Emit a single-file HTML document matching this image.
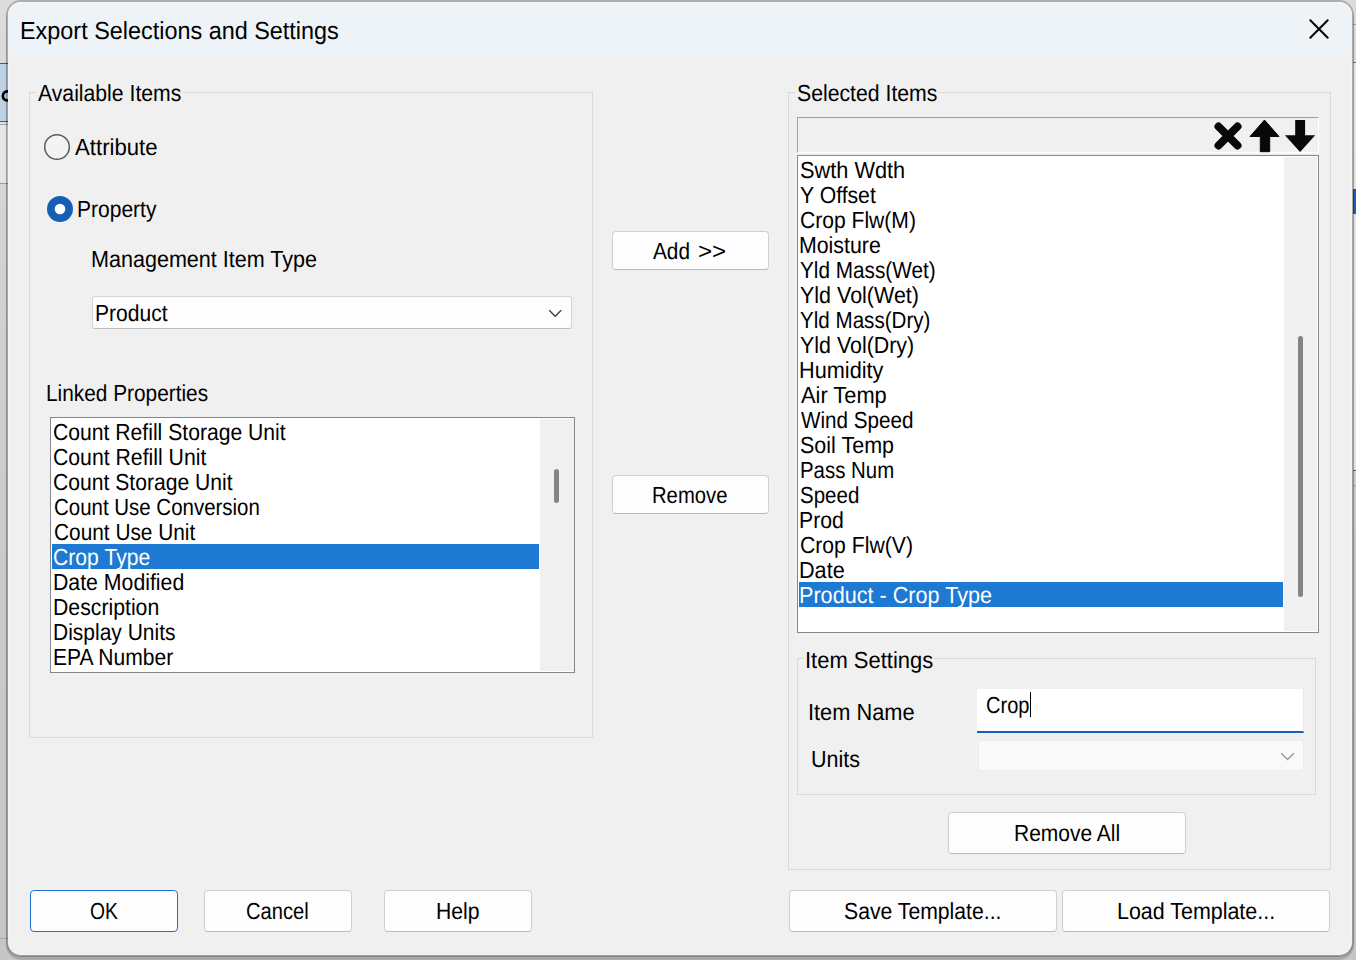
<!DOCTYPE html>
<html><head><meta charset="utf-8">
<style>
*{margin:0;padding:0;box-sizing:border-box}
html,body{width:1356px;height:960px;overflow:hidden;background:#cdcdcd;font-family:"Liberation Sans",sans-serif;font-size:23.3px;color:#000;text-rendering:geometricPrecision}
.a{position:absolute}
.t{position:absolute;white-space:nowrap;line-height:25px;height:25px;transform-origin:0 0}
#dlg{left:6px;top:0;width:1348px;height:957px;background:#f0f0f0;background-clip:padding-box;border:2px solid rgba(0,0,0,.21);border-radius:15px;box-shadow:inset 0 0 0 1px rgba(255,255,255,.3),0 3px 1px 0 rgba(0,0,0,.15)}
#title{left:8px;top:2px;width:1344px;height:56px;background:#eef3f8;border-radius:13px 13px 0 0;border-top:1px solid #f3f8fd}
.grp{position:absolute;border:1px solid #d9d9d9}
.btn{position:absolute;background:#fdfdfd;border:1px solid #d0d0d0;border-bottom-color:#b9b9b9;border-radius:4px}
.list{position:absolute;background:#fff;border:1px solid #838790}
.sel{background:#1e79d2}
.track{position:absolute;background:#f0f0f0}
.thumb{position:absolute;background:#858585;border-radius:3px}

</style></head><body>
<div class="a" style="left:0;top:0;width:1356px;height:960px;background:linear-gradient(180deg,#dcdcdc 0%,#d2d2d2 30%,#cacaca 60%,#c6c6c6 100%)"></div>
<div class="a" style="left:0;top:63px;width:8px;height:59px;background:#bdd2e4;border-top:1px solid #2a5d9a;border-bottom:1px solid #2a5d9a"></div>
<div class="a" style="left:0;top:122px;width:8px;height:2px;background:#e2e2e2"></div>
<div class="a" style="left:0;top:124px;width:8px;height:1px;background:#a4a4a4"></div>
<div class="a" style="left:0;top:125px;width:8px;height:58px;background:#e6e6e6"></div>
<div class="a" style="left:0;top:183px;width:8px;height:1px;background:#9c9c9c"></div>
<div class="a" style="left:0;top:938px;width:8px;height:1px;background:#a9a9a9"></div>
<div class="a" style="left:1353px;top:24px;width:3px;height:1px;background:#a0a0a0"></div>
<div class="a" style="left:1353px;top:62px;width:3px;height:1px;background:#777"></div>
<div class="a" style="left:1353px;top:63px;width:3px;height:407px;background:#e4e4e4"></div>
<div class="a" style="left:1353px;top:189px;width:3px;height:25px;background:#1f5fb0"></div>
<div class="a" style="left:1353px;top:470px;width:3px;height:1px;background:#666"></div>
<div class="a" style="left:1353px;top:471px;width:3px;height:14px;background:#cfcfcf"></div>
<div class="a" style="left:1353px;top:485px;width:3px;height:1px;background:#aaa"></div>
<svg class="a" style="left:0;top:86px" width="10" height="20" viewBox="0 0 10 20"><path d="M8.4 5.4A4.6 4.6 0 1 0 8.4 14.4" fill="none" stroke="#000" stroke-width="2.7"/></svg>
<div class="a" id="dlg"></div>
<div class="a" id="title"></div>
<div class="t" style="left:19.90px;top:19px;font-size:24.7px;transform:scaleX(0.9482);">Export Selections and Settings</div>
<svg class="a" style="left:1305px;top:15px" width="28" height="28" viewBox="0 0 28 28"><path d="M5.3 5.3L22.7 22.7M22.7 5.3L5.3 22.7" stroke="#000" stroke-width="2" stroke-linecap="round"/></svg>
<div class="grp" style="left:29px;top:92px;width:564px;height:646px"></div>
<div class="a" style="left:36px;top:80px;width:147px;height:25px;background:#f0f0f0"></div>
<div class="t" style="left:38.20px;top:81px;font-size:23.3px;transform:scaleX(0.9096);">Available Items</div>
<svg class="a" style="left:43px;top:133px" width="28" height="28" viewBox="0 0 28 28"><circle cx="14" cy="14" r="12.3" fill="#f3f3f3" stroke="#5a5a5a" stroke-width="1.5"/></svg>
<div class="t" style="left:75.20px;top:135px;font-size:23.3px;transform:scaleX(0.9523);">Attribute</div>
<svg class="a" style="left:46px;top:195px" width="28" height="28" viewBox="0 0 28 28"><circle cx="14" cy="14" r="13" fill="#175fb5"/><circle cx="14" cy="14" r="5.3" fill="#fff"/></svg>
<div class="t" style="left:77.40px;top:197px;font-size:23.3px;transform:scaleX(0.9023);">Property</div>
<div class="t" style="left:91.05px;top:247px;font-size:23.3px;transform:scaleX(0.9253);">Management Item Type</div>
<div class="a" style="left:92px;top:296px;width:480px;height:33px;background:#fdfdfd;border:1px solid #d4d4d4;border-bottom-color:#bdbdbd;border-radius:3px"></div>
<div class="t" style="left:95.39px;top:301px;font-size:23.3px;transform:scaleX(0.9045);">Product</div>
<svg class="a" style="left:546px;top:306px" width="18" height="14" viewBox="0 0 18 14"><path d="M3.2 4.2L9.2 10.2L15.2 4.2" fill="none" stroke="#404040" stroke-width="1.4"/></svg>
<div class="t" style="left:46.31px;top:381px;font-size:23.3px;transform:scaleX(0.8939);">Linked Properties</div>
<div class="list" style="left:50px;top:417px;width:525px;height:256px"></div>
<div class="track" style="left:540px;top:419px;width:34px;height:252px"></div>
<div class="thumb" style="left:554px;top:469px;width:5px;height:34px"></div>
<div class="t" style="left:53.49px;top:420px;font-size:23.3px;transform:scaleX(0.9075);">Count Refill Storage Unit</div>
<div class="t" style="left:53.49px;top:445px;font-size:23.3px;transform:scaleX(0.9108);">Count Refill Unit</div>
<div class="t" style="left:53.49px;top:470px;font-size:23.3px;transform:scaleX(0.9066);">Count Storage Unit</div>
<div class="t" style="left:53.52px;top:495px;font-size:23.3px;transform:scaleX(0.8784);">Count Use Conversion</div>
<div class="t" style="left:53.51px;top:520px;font-size:23.3px;transform:scaleX(0.8943);">Count Use Unit</div>
<div class="a sel" style="left:52px;top:544px;width:487px;height:25px"></div>
<div class="t" style="left:53.49px;top:545px;font-size:23.3px;transform:scaleX(0.9086);color:#fff">Crop Type</div>
<div class="t" style="left:52.57px;top:570px;font-size:23.3px;transform:scaleX(0.9129);">Date Modified</div>
<div class="t" style="left:52.58px;top:595px;font-size:23.3px;transform:scaleX(0.9115);">Description</div>
<div class="t" style="left:52.60px;top:620px;font-size:23.3px;transform:scaleX(0.9008);">Display Units</div>
<div class="t" style="left:52.59px;top:645px;font-size:23.3px;transform:scaleX(0.9046);">EPA Number</div>
<div class="btn" style="left:612px;top:231px;width:157px;height:39px"></div>
<div class="t" style="left:653.00px;top:239px;font-size:23.3px;transform:scaleX(0.8925);">Add</div>
<div class="t" style="left:697.86px;top:239px;font-size:23.3px;transform:scaleX(1.0360);">&gt;&gt;</div>
<div class="btn" style="left:612px;top:475px;width:157px;height:39px"></div>
<div class="t" style="left:652.06px;top:483px;font-size:23.3px;transform:scaleX(0.8690);">Remove</div>
<div class="grp" style="left:788px;top:92px;width:543px;height:778px"></div>
<div class="a" style="left:795px;top:80px;width:143px;height:25px;background:#f0f0f0"></div>
<div class="t" style="left:796.59px;top:81px;font-size:23.3px;transform:scaleX(0.9112);">Selected Items</div>
<div class="a" style="left:797px;top:117px;width:522px;height:36px;background:#f0f0f0;border-top:1px solid #a0a0a0;border-left:1px solid #a0a0a0;border-right:1px solid #fff;border-bottom:1px solid #fff"></div>
<svg class="a" style="left:1210px;top:118px" width="110" height="36" viewBox="0 0 110 36"><path d="M8.5 8.5L27.5 27.5M27.5 8.5L8.5 27.5" stroke="#070809" stroke-width="8" stroke-linecap="round"/><path d="M54.5 2L69 18.5H59.7V33.7H50.3V18.5H40Z" fill="#070809" stroke="#070809" stroke-width="1" stroke-linejoin="round"/><path d="M85.2 2H95.1V17.2H105.2L90.1 34L74.9 17.2H85.2Z" fill="#070809"/></svg>
<div class="list" style="left:797px;top:155px;width:522px;height:478px"></div>
<div class="track" style="left:1284px;top:157px;width:33px;height:474px"></div>
<div class="thumb" style="left:1298px;top:336px;width:5px;height:261px"></div>
<div class="t" style="left:800.37px;top:158px;font-size:23.3px;transform:scaleX(0.9336);">Swth Wdth</div>
<div class="t" style="left:800.39px;top:183px;font-size:23.3px;transform:scaleX(0.9098);">Y Offset</div>
<div class="t" style="left:800.40px;top:208px;font-size:23.3px;transform:scaleX(0.9048);">Crop Flw(M)</div>
<div class="t" style="left:799.47px;top:233px;font-size:23.3px;transform:scaleX(0.9151);">Moisture</div>
<div class="t" style="left:800.41px;top:258px;font-size:23.3px;transform:scaleX(0.8907);">Yld Mass(Wet)</div>
<div class="t" style="left:800.38px;top:283px;font-size:23.3px;transform:scaleX(0.9220);">Yld Vol(Wet)</div>
<div class="t" style="left:800.42px;top:308px;font-size:23.3px;transform:scaleX(0.8841);">Yld Mass(Dry)</div>
<div class="t" style="left:800.38px;top:333px;font-size:23.3px;transform:scaleX(0.9189);">Yld Vol(Dry)</div>
<div class="t" style="left:799.44px;top:358px;font-size:23.3px;transform:scaleX(0.9318);">Humidity</div>
<div class="t" style="left:801.30px;top:383px;font-size:23.3px;transform:scaleX(0.9374);">Air Temp</div>
<div class="t" style="left:801.30px;top:408px;font-size:23.3px;transform:scaleX(0.8865);">Wind Speed</div>
<div class="t" style="left:800.38px;top:433px;font-size:23.3px;transform:scaleX(0.9230);">Soil Temp</div>
<div class="t" style="left:799.55px;top:458px;font-size:23.3px;transform:scaleX(0.8760);">Pass Num</div>
<div class="t" style="left:800.42px;top:483px;font-size:23.3px;transform:scaleX(0.8800);">Speed</div>
<div class="t" style="left:799.48px;top:508px;font-size:23.3px;transform:scaleX(0.9109);">Prod</div>
<div class="t" style="left:800.39px;top:533px;font-size:23.3px;transform:scaleX(0.9090);">Crop Flw(V)</div>
<div class="t" style="left:799.44px;top:558px;font-size:23.3px;transform:scaleX(0.9283);">Date</div>
<div class="a sel" style="left:799px;top:582px;width:484px;height:25px"></div>
<div class="t" style="left:799.44px;top:583px;font-size:23.3px;transform:scaleX(0.9278);color:#fff">Product - Crop Type</div>
<div class="grp" style="left:797px;top:658px;width:519px;height:137px"></div>
<div class="a" style="left:804px;top:647px;width:130px;height:25px;background:#f0f0f0"></div>
<div class="t" style="left:804.81px;top:648px;font-size:23.3px;transform:scaleX(0.9429);">Item Settings</div>
<div class="t" style="left:808.13px;top:700px;font-size:23.3px;transform:scaleX(0.9351);">Item Name</div>
<div class="t" style="left:811.15px;top:747px;font-size:23.3px;transform:scaleX(0.9240);">Units</div>
<div class="a" style="left:977px;top:689px;width:327px;height:44px;background:#fff;border-bottom:2px solid #1660bd;border-right:1px solid #e3e8ee"></div>
<div class="t" style="left:985.74px;top:693px;font-size:23.3px;transform:scaleX(0.8602);">Crop</div>
<div class="a" style="left:1030px;top:692px;width:1px;height:25px;background:#000"></div>
<div class="a" style="left:978px;top:740px;width:326px;height:31px;background:#f9f9f9;border:1px solid #ededed;border-radius:2px"></div>
<svg class="a" style="left:1278px;top:749px" width="18" height="14" viewBox="0 0 18 14"><path d="M3.2 4.2L9.5 10.5L15.8 4.2" fill="none" stroke="#9a9a9a" stroke-width="1.4"/></svg>
<div class="btn" style="left:948px;top:812px;width:238px;height:42px"></div>
<div class="t" style="left:1013.80px;top:821px;font-size:23.3px;transform:scaleX(0.9000);">Remove All</div>
<div class="btn" style="left:30px;top:890px;width:148px;height:42px;border:1px solid #1f73cc"></div>
<div class="t" style="left:89.57px;top:899px;font-size:23.3px;transform:scaleX(0.8281);">OK</div>
<div class="btn" style="left:204px;top:890px;width:148px;height:42px"></div>
<div class="t" style="left:246.43px;top:899px;font-size:23.3px;transform:scaleX(0.8657);">Cancel</div>
<div class="btn" style="left:384px;top:890px;width:148px;height:42px"></div>
<div class="t" style="left:436.18px;top:899px;font-size:23.3px;transform:scaleX(0.9089);">Help</div>
<div class="btn" style="left:789px;top:890px;width:268px;height:42px"></div>
<div class="t" style="left:844.29px;top:899px;font-size:23.3px;transform:scaleX(0.9094);">Save Template...</div>
<div class="btn" style="left:1062px;top:890px;width:268px;height:42px"></div>
<div class="t" style="left:1116.56px;top:899px;font-size:23.3px;transform:scaleX(0.9202);">Load Template...</div>
</body></html>
